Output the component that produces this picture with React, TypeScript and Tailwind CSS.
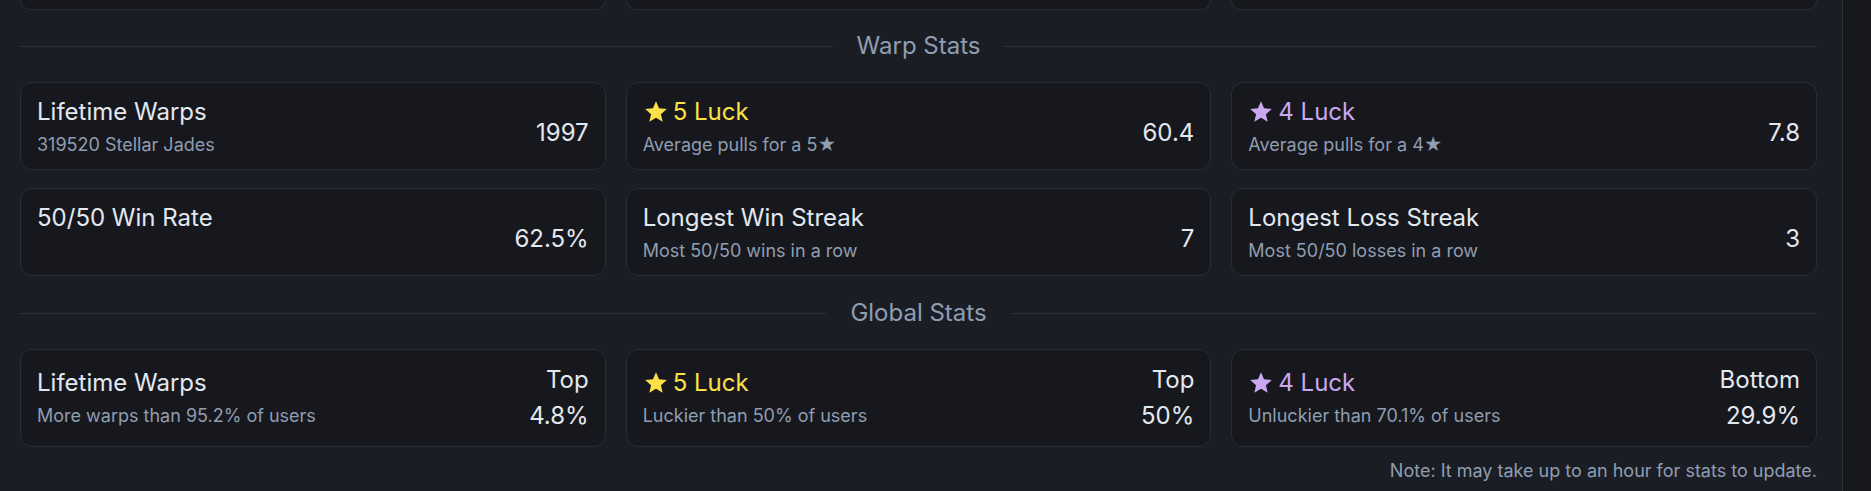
import type { ReactNode } from 'react';

function StarIcon({ className }: { className: string }) {
  return (
    <svg viewBox="0 0 24 24" className={className} fill="currentColor">
      <path d="M12 17.27 18.18 21l-1.64-7.03L22 9.24l-7.19-.61L12 2 9.19 8.63 2 9.24l5.46 4.73L5.82 21z" />
    </svg>
  );
}

interface Stat {
  title: ReactNode;
  sub?: string;
  value: ReactNode;
}

const fiveLuck = (
  <span className="flex items-center gap-1 text-[#fde047]">
    <StarIcon className="h-[26px] w-[26px]" />
    5 Luck
  </span>
);

const fourLuck = (
  <span className="flex items-center gap-1 text-[#c9a8f0]">
    <StarIcon className="h-[26px] w-[26px]" />
    4 Luck
  </span>
);

const warpStats: Stat[] = [
  { title: 'Lifetime Warps', sub: '319520 Stellar Jades', value: '1997' },
  { title: fiveLuck, sub: 'Average pulls for a 5★', value: '60.4' },
  { title: fourLuck, sub: 'Average pulls for a 4★', value: '7.8' },
  { title: '50/50 Win Rate', value: '62.5%' },
  { title: 'Longest Win Streak', sub: 'Most 50/50 wins in a row', value: '7' },
  { title: 'Longest Loss Streak', sub: 'Most 50/50 losses in a row', value: '3' },
];

const globalStats: Stat[] = [
  { title: 'Lifetime Warps', sub: 'More warps than 95.2% of users', value: ['Top', '4.8%'] },
  { title: fiveLuck, sub: 'Luckier than 50% of users', value: ['Top', '50%'] },
  { title: fourLuck, sub: 'Unluckier than 70.1% of users', value: ['Bottom', '29.9%'] },
];

function WarpCard({ stat }: { stat: Stat }) {
  return (
    <div className="flex h-[88px] items-start justify-between rounded-xl border border-[#2a2d36] bg-[#17181d] px-4 pt-[13px]">
      <div className="flex flex-col">
        <div className="text-2xl leading-8 text-[#e2e8f0]">{stat.title}</div>
        {stat.sub && <div className="text-lg leading-[34px] text-[#8f9db1]">{stat.sub}</div>}
      </div>
      <div className="self-center text-2xl leading-8 text-[#e2e8f0]">{stat.value}</div>
    </div>
  );
}

function GlobalCard({ stat }: { stat: Stat }) {
  const [label, pct] = stat.value as string[];
  return (
    <div className="flex h-[98px] items-center justify-between rounded-xl border border-[#2a2d36] bg-[#17181d] px-4">
      <div className="flex flex-col pt-1">
        <div className="text-2xl leading-8 text-[#e2e8f0]">{stat.title}</div>
        <div className="text-lg leading-[34px] text-[#8f9db1]">{stat.sub}</div>
      </div>
      <div className="flex flex-col items-end text-2xl leading-9 text-[#e2e8f0]">
        <span>{label}</span>
        <span>{pct}</span>
      </div>
    </div>
  );
}

function SectionHeader({ label, className }: { label: string; className: string }) {
  return (
    <div className={`flex items-center gap-6 ${className}`}>
      <div className="h-px flex-1 bg-[#2c2f38]" />
      <span className="text-2xl leading-8 text-[#8f9db1]">{label}</span>
      <div className="h-px flex-1 bg-[#2c2f38]" />
    </div>
  );
}

export default function App() {
  return (
    <div className="flex min-h-[491px] w-full bg-[#17181c] font-[Inter,sans-serif]">
      <div className="w-[1843px] shrink-0 border-r border-[#2d3039] bg-[#1b1d24] pl-5 pr-[25px]">
        <div className="grid grid-cols-3 gap-5">
          {[0, 1, 2].map((i) => (
            <div key={i} className="h-[10px] rounded-b-xl border-x border-b border-[#2a2d36] bg-[#17181d]" />
          ))}
        </div>

        <SectionHeader label="Warp Stats" className="my-5" />
        <div className="grid grid-cols-3 gap-x-5 gap-y-[18px]">
          {warpStats.map((s, i) => (
            <WarpCard key={i} stat={s} />
          ))}
        </div>

        <SectionHeader label="Global Stats" className="mb-5 mt-[21px]" />
        <div className="grid grid-cols-3 gap-5">
          {globalStats.map((s, i) => (
            <GlobalCard key={i} stat={s} />
          ))}
        </div>

        <p className="mt-2.5 text-right text-lg leading-7 text-[#8f9db1]">
          Note: It may take up to an hour for stats to update.
        </p>
      </div>
    </div>
  );
}
